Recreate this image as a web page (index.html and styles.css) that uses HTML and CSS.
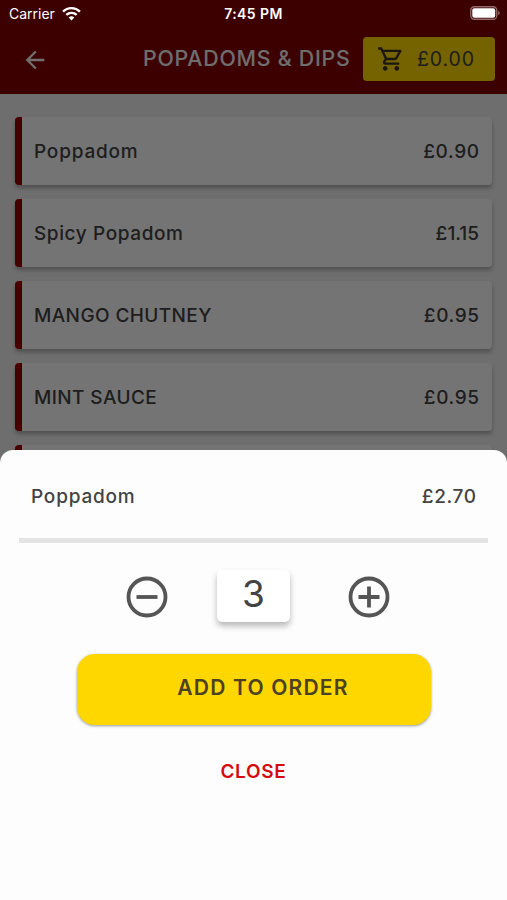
FILE: index.html
```html
<!DOCTYPE html>
<html lang="en">
<head>
<meta charset="utf-8">
<title>Popadoms &amp; Dips</title>
<link rel="stylesheet" href="styles.css">
</head>
<body>
<div class="app">
  <header class="bar">
    <svg class="back" viewBox="0 0 24 24"><path d="M20 11H7.83l5.59-5.59L12 4l-8 8 8 8 1.41-1.41L7.83 13H20z"/></svg>
    <h1 class="title">POPADOMS &amp; DIPS</h1>
    <div class="cart">
      <svg class="cart-icon" viewBox="0 0 24 24"><path d="M15.55 13c.75 0 1.41-.41 1.75-1.03l3.58-6.49A.996.996 0 0 0 20.01 4H5.21l-.94-2H1v2h2l3.6 7.59-1.35 2.44C4.52 15.37 5.48 17 7 17h12v-2H7l1.1-2h7.45zM6.16 6h12.15l-2.76 5H8.53L6.16 6zM7 18c-1.1 0-1.99.9-1.99 2S5.9 22 7 22s2-.9 2-2-.9-2-2-2zm10 0c-1.1 0-1.99.9-1.99 2s.89 2 1.99 2 2-.9 2-2-.9-2-2-2z"/></svg>
      <span class="total">£0.00</span>
    </div>
  </header>
  <main class="list">
    <div class="item"><span class="name">Poppadom</span><span class="price">£0.90</span></div>
    <div class="item"><span class="name spicy">Spicy Popadom</span><span class="price narrow">£1.15</span></div>
    <div class="item"><span class="name caps">MANGO CHUTNEY</span><span class="price">£0.95</span></div>
    <div class="item"><span class="name caps">MINT SAUCE</span><span class="price">£0.95</span></div>
    <div class="item"></div>
  </main>
</div>
<div class="scrim"></div>
<div class="status">
  <span class="carrier">Carrier</span>
  <svg class="wifi" viewBox="0 0 18 14"><path d="M9 13.6 6.3 10.8a3.9 3.9 0 0 1 5.4 0z" fill="#fff"/><path d="M4.1 8.4a7 7 0 0 1 9.8 0M1 5.2a11.4 11.4 0 0 1 16 0" fill="none" stroke="#fff" stroke-width="2.3"/></svg>
  <span class="time">7:45 PM</span>
  <svg class="battery" viewBox="0 0 30 14"><rect x=".75" y=".75" width="26" height="12.5" rx="3.5" fill="none" stroke="#94696b" stroke-width="1.3"/><rect x="2.3" y="2.3" width="22.9" height="9.4" rx="2" fill="#fff"/><path d="M28.2 4.8c2 .8 2 3.6 0 4.4z" fill="#94696b"/></svg>
</div>
<section class="sheet">
  <div class="summary"><span class="name">Poppadom</span><span class="price">£2.70</span></div>
  <div class="divider"></div>
  <div class="stepper">
    <svg class="step" viewBox="0 0 42 42"><circle cx="21" cy="21" r="18.5"/><path d="M10.5 21h21"/></svg>
    <div class="qty"><span class="count">3</span></div>
    <svg class="step" viewBox="0 0 42 42"><circle cx="21" cy="21" r="18.5"/><path d="M10.5 21h21M21 10.5v21"/></svg>
  </div>
  <button class="add">ADD TO ORDER</button>
  <button class="close">CLOSE</button>
</section>
</body>
</html>
```
FILE: styles.css
```css
* { box-sizing: border-box; }
body {
  margin: 0;
  width: 507px;
  height: 900px;
  position: relative;
  overflow: hidden;
  font-family: Inter, "Liberation Sans", sans-serif;
  color: #434343;
}
svg { display: block; flex: none; }
button { border: 0; padding: 0; font: inherit; background: none; }
.app { height: 900px; background: #f0f0f0; }
.bar {
  height: 94px;
  padding: 24px 12px 0 21px;
  display: flex;
  align-items: center;
  background: #840000;
}
.back { width: 28px; height: 28px; margin-top: 1px; fill: #f4f4f4; }
.title {
  margin: 0 0 2px auto;
  width: 208px;
  white-space: nowrap;
  font-size: 21.3px;
  font-weight: 500;
  letter-spacing: 0.78px;
  color: #efefef;
}
.cart {
  width: 132px;
  height: 44px;
  margin-left: 12px;
  padding-left: 14px;
  display: flex;
  align-items: center;
  border-radius: 4px;
  background: #ffd700;
}
.cart-icon { width: 28px; height: 28px; fill: #3c3220; }
.total { margin-left: 12px; font-size: 19.5px; letter-spacing: 0.9px; }
.list { padding: 23px 15px 0; display: grid; gap: 14px; }
.item {
  height: 68px;
  padding: 0 13px 0 12px;
  display: flex;
  justify-content: space-between;
  align-items: center;
  border-left: 7px solid #980000;
  border-radius: 4px;
  background: #fdfdfd;
  box-shadow: 0 3px 4px rgba(0, 0, 0, 0.28);
}
.name, .price { font-size: 19px; font-weight: 450; white-space: nowrap; }
.name { letter-spacing: 0.8px; }
.name.spicy { letter-spacing: 0.6px; }
.name.caps { letter-spacing: 0.4px; }
.price { letter-spacing: 0.6px; margin-right: -0.6px; }
.price.narrow { letter-spacing: 0; margin-right: 0; }
.scrim { position: absolute; inset: 0; background: rgba(0, 0, 0, 0.54); }
.status {
  position: absolute;
  inset: 0 0 auto;
  height: 26px;
  padding: 0 7px 0 9px;
  display: grid;
  grid-template-columns: 47px 19px 1fr 30px;
  align-items: center;
  column-gap: 6px;
  color: #fff;
  font-size: 14px;
}
.wifi { width: 19px; height: 15px; }
.time { padding-right: 44px; font-weight: 600; text-align: center; letter-spacing: 0.4px; }
.battery { width: 30px; height: 14px; }
.sheet {
  position: absolute;
  inset: 450px 0 0;
  padding: 0 19px;
  display: flex;
  flex-direction: column;
  align-items: center;
  border-radius: 13px 13px 0 0;
  background: #fdfdfd;
}
.summary {
  width: 100%;
  height: 88px;
  padding: 5px 12px 0;
  display: flex;
  align-items: center;
  justify-content: space-between;
}
.divider { width: 100%; height: 5px; background: #e4e4e4; }
.stepper {
  width: 264px;
  margin: 27px 0 0 9px;
  display: flex;
  align-items: center;
  justify-content: space-between;
}
.step { width: 42px; height: 42px; margin-top: 2px; fill: none; stroke: #555; stroke-width: 3.8; }
.qty {
  width: 73px;
  height: 52px;
  margin-right: 9px;
  border-radius: 5px;
  background: #fff;
  box-shadow: 0 4px 6px rgba(0, 0, 0, 0.28);
  text-align: center;
  font-size: 37px;
  line-height: 47px;
}
.add {
  width: 354px;
  height: 71px;
  margin-top: 32px;
  padding: 0 0 4px 19px;
  border-radius: 18px;
  background: #ffd700;
  box-shadow: 0 1px 3px rgba(0, 0, 0, 0.4);
  color: #4d4123;
  font-size: 21px;
  font-weight: 600;
  letter-spacing: 1.2px;
}
.close { margin-top: 35px; color: #d50b0b; font-size: 19px; font-weight: 600; letter-spacing: 0.7px; }
```
